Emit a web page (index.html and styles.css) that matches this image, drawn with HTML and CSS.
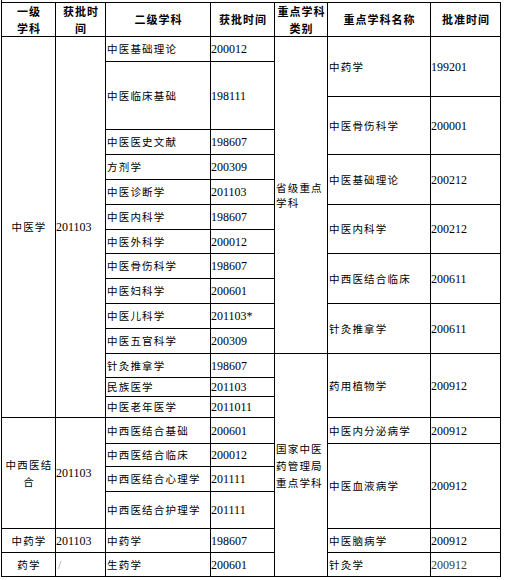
FILE: index.html
```html
<!DOCTYPE html>
<html lang="zh-CN">
<head>
<meta charset="utf-8">
<title>学科列表</title>
<link rel="stylesheet" href="styles.css">
</head>
<body>
<div class="sheet">
  <div class="grid">
    <div class="c h">一级<br>学科</div>
    <div class="c h">获批时<br>间</div>
    <div class="c h">二级学科</div>
    <div class="c h">获批时间</div>
    <div class="c h">重点学科<br>类别</div>
    <div class="c h">重点学科名称</div>
    <div class="c h">批准时间</div>

    <div class="c ctr s15">中医学</div>
    <div class="c n s15">201103</div>
    <div class="c">中医基础理论</div>
    <div class="c n">200012</div>
    <div class="c s12 lh15">省级重点<br>学科</div>
    <div class="c s2">中药学</div>
    <div class="c n s2">199201</div>

    <div class="c s2">中医临床基础</div>
    <div class="c n s2">198111</div>

    <div class="c s2">中医骨伤科学</div>
    <div class="c n s2">200001</div>

    <div class="c">中医医史文献</div>
    <div class="c n">198607</div>

    <div class="c">方剂学</div>
    <div class="c n">200309</div>
    <div class="c s2">中医基础理论</div>
    <div class="c n s2">200212</div>

    <div class="c">中医诊断学</div>
    <div class="c n">201103</div>

    <div class="c">中医内科学</div>
    <div class="c n">198607</div>
    <div class="c s2">中医内科学</div>
    <div class="c n s2">200212</div>

    <div class="c">中医外科学</div>
    <div class="c n">200012</div>

    <div class="c">中医骨伤科学</div>
    <div class="c n">198607</div>
    <div class="c s2">中西医结合临床</div>
    <div class="c n s2">200611</div>

    <div class="c">中医妇科学</div>
    <div class="c n">200601</div>

    <div class="c">中医儿科学</div>
    <div class="c n">201103*</div>
    <div class="c s2">针灸推拿学</div>
    <div class="c n s2">200611</div>

    <div class="c">中医五官科学</div>
    <div class="c n">200309</div>

    <div class="c">针灸推拿学</div>
    <div class="c n">198607</div>
    <div class="c s9 lh17">国家中医<br>药管理局<br>重点学科</div>
    <div class="c s3">药用植物学</div>
    <div class="c n s3">200912</div>

    <div class="c">民族医学</div>
    <div class="c n">201103</div>

    <div class="c">中医老年医学</div>
    <div class="c n">2011011</div>

    <div class="c ctr s4 lh17">中西医结<br>合</div>
    <div class="c n s4">201103</div>
    <div class="c">中西医结合基础</div>
    <div class="c n">200601</div>
    <div class="c">中医内分泌病学</div>
    <div class="c n">200912</div>

    <div class="c">中西医结合临床</div>
    <div class="c n">200012</div>
    <div class="c s3">中医血液病学</div>
    <div class="c n s3">200912</div>

    <div class="c">中西医结合心理学</div>
    <div class="c n">201111</div>

    <div class="c">中西医结合护理学</div>
    <div class="c n">201111</div>

    <div class="c ctr">中药学</div>
    <div class="c n">201103</div>
    <div class="c">中药学</div>
    <div class="c n">198607</div>
    <div class="c">中医脑病学</div>
    <div class="c n">200912</div>

    <div class="c ctr">药学</div>
    <div class="c n muted">/</div>
    <div class="c">生药学</div>
    <div class="c n">200601</div>
    <div class="c">针灸学</div>
    <div class="c n faded">200912</div>
  </div>
</div>
</body>
</html>
```
FILE: styles.css
```css
* {
  box-sizing: border-box;
}

body {
  margin: 0;
  background: #ffffff;
}

.sheet {
  width: 500px;
  margin-left: 1px;
  padding-top: 2px;
  border-left: 1px solid #000;
}

.grid {
  display: grid;
  grid-template-columns: 54px 50px 105px 64px 53px 103px 70px;
  grid-template-rows: 34px 25px 35px 33px 25px 25px 25px 25px 24px 25px 25px 25px 25px 24px 19px 21px 26px 23px 25px 37px 24px 24px;
  border-top: 1px solid #000;
  font-family: "Noto Sans CJK SC", sans-serif;
  font-size: 10.5px;
  letter-spacing: 1.2px;
  color: #000;
}

.c {
  display: flex;
  align-items: center;
  padding-left: 1px;
  border-right: 1px solid #000;
  border-bottom: 1px solid #000;
  line-height: 16px;
  white-space: nowrap;
}

.h {
  justify-content: center;
  text-align: center;
  font-weight: 700;
  font-size: 11px;
  letter-spacing: 1px;
  line-height: 16.5px;
}

.ctr {
  justify-content: center;
  text-align: center;
}

.n {
  font-family: "Liberation Serif", serif;
  font-size: 12px;
  letter-spacing: 0;
  padding-left: 0;
}

.muted {
  color: #999;
  padding-left: 2px;
}

.faded {
  color: #3a3a3a;
}

.lh15 {
  line-height: 15px;
}

.lh17 {
  line-height: 17px;
}

.s2 { grid-row: span 2; }
.s3 { grid-row: span 3; }
.s4 { grid-row: span 4; }
.s9 { grid-row: span 9; }
.s12 { grid-row: span 12; }
.s15 { grid-row: span 15; }
```
